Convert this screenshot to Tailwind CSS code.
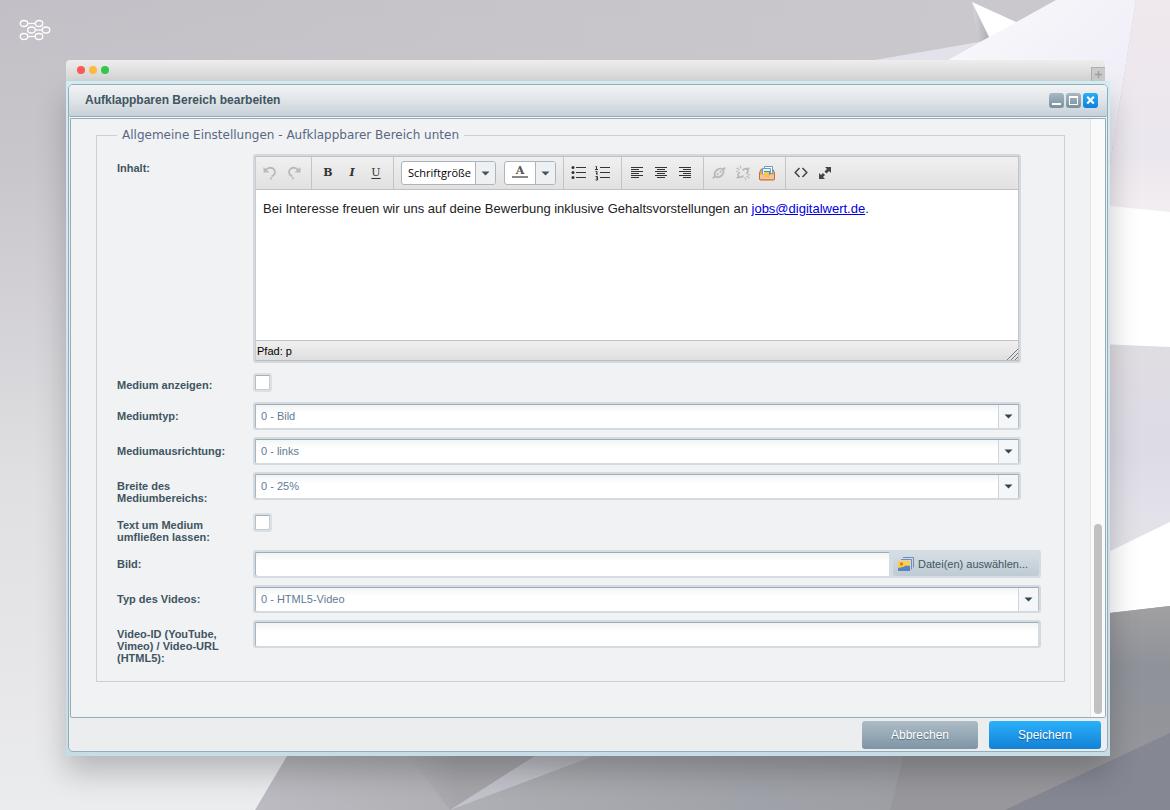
<!DOCTYPE html>
<html lang="de">
<head>
<meta charset="utf-8">
<title>Aufklappbaren Bereich bearbeiten</title>
<script src="https://cdn.jsdelivr.net/npm/@tailwindcss/browser@4"></script>
</head>
<body class="relative flex min-h-screen flex-col overflow-x-hidden bg-[#c9c7cc] font-['Liberation_Sans',Arial,sans-serif] text-[11px] leading-3 text-[#3f5561]">

<!-- Backdrop -->
<svg class="absolute inset-0 h-full w-full" viewBox="0 0 1170 810" preserveAspectRatio="none" aria-hidden="true">
  <defs>
    <linearGradient id="wall" x1="0" y1="0" x2="0" y2="1"><stop offset="0" stop-color="#c2c0c6"/><stop offset=".2" stop-color="#c8c6cb"/><stop offset=".6" stop-color="#e0dfe2"/><stop offset="1" stop-color="#ebecee"/></linearGradient>
    <linearGradient id="wallTop" x1="0" y1="0" x2="1" y2="0"><stop offset="0" stop-color="#cbc8cd" stop-opacity="0"/><stop offset="1" stop-color="#cbc8cd"/></linearGradient>
    <linearGradient id="floor" x1="0" y1="0" x2="1" y2="0"><stop offset="0" stop-color="#bcbbc1"/><stop offset=".3" stop-color="#abacb1"/><stop offset=".55" stop-color="#a0a2a9"/><stop offset="1" stop-color="#99999d"/></linearGradient>
    <linearGradient id="crystal" x1="0" y1="0" x2="1" y2="1"><stop offset="0" stop-color="#fbfafc"/><stop offset="1" stop-color="#ebe9f5"/></linearGradient>
    <linearGradient id="pink" x1="0" y1="0" x2="0" y2="1"><stop offset="0" stop-color="#efe8ed"/><stop offset=".7" stop-color="#ebe7ee"/><stop offset="1" stop-color="#f3eff1"/></linearGradient>
    <linearGradient id="lav" x1="0" y1="0" x2="0" y2="1"><stop offset="0" stop-color="#e0dde2"/><stop offset=".5" stop-color="#dddbe6"/><stop offset="1" stop-color="#e6e4ea"/></linearGradient>
    <linearGradient id="right" x1="0" y1="0" x2="0" y2="1"><stop offset="0" stop-color="#a1a0a3"/><stop offset=".3" stop-color="#8f9299"/><stop offset="1" stop-color="#97989c"/></linearGradient>
    <linearGradient id="spike" x1="0" y1="0" x2="1" y2="0"><stop offset="0" stop-color="#d8d6db"/><stop offset="1" stop-color="#aba9af"/></linearGradient>
    <linearGradient id="streak" x1="0" y1="1" x2="1" y2="0"><stop offset="0" stop-color="#c3c3cd"/><stop offset=".5" stop-color="#c3c3cd"/><stop offset="1" stop-color="#b0b0b6"/></linearGradient>
    <linearGradient id="wedge" x1="0" y1="0" x2="1" y2="0"><stop offset="0" stop-color="#a8a8ad" stop-opacity="0"/><stop offset=".4" stop-color="#a5a5aa"/><stop offset="1" stop-color="#a5a5aa"/></linearGradient>
  </defs>
  <rect width="1170" height="810" fill="url(#wall)"/>
  <rect width="1000" height="70" fill="url(#wallTop)"/>
  <rect x="1000" width="170" height="70" fill="#cbc8cd"/>
  <polygon points="840,66 985,41 1015,60 1015,90 840,90" fill="#e3e1ea"/>
  <polygon points="972,2 991,37 978,42" fill="url(#spike)"/>
  <polygon points="972,2 1016,22 1020,34 989,37" fill="#ffffff"/>
  <polygon points="1056,0 1136,0 1109,170 1109,90 930,70" fill="url(#crystal)"/>
  <polygon points="1136,0 1170,0 1170,220 1100,220 1109,170" fill="url(#pink)"/>
  <polygon points="1100,205 1170,212 1170,620 1100,620" fill="#ffffff"/>
  <polygon points="1100,344 1170,347 1170,522 1100,556" fill="url(#lav)"/>
  <polygon points="287,756 310,716 1110,613 1170,606 1170,810 255,810" fill="url(#floor)"/>
  <polygon points="1100,614 1170,606 1170,810 1100,810" fill="url(#right)"/>
  <polygon points="404,750 450,810 545,750" fill="url(#wedge)"/>
  <polygon points="450,810 538,754 610,750" fill="url(#streak)"/>
  <polygon points="905,750 890,810 1110,810 1110,750" fill="#98989c"/>
  <polygon points="1005,810 1170,733 1170,810" fill="#858893"/>
</svg>

<!-- Wallpaper logo -->
<svg class="absolute top-[19px] left-[19px] h-[22px] w-[32px]" viewBox="0 0 32 22" fill="none" stroke="#fff" stroke-width="1.3" aria-hidden="true">
  <ellipse cx="5" cy="4.500" rx="3.800" ry="3"/><ellipse cx="20" cy="4.500" rx="3.800" ry="3"/><path d="M8.800 4.500h7.400"/>
  <ellipse cx="12.500" cy="11" rx="3.800" ry="3"/><ellipse cx="27" cy="11" rx="3.800" ry="3"/><path d="M16.300 11h6.900"/>
  <ellipse cx="5" cy="17.500" rx="3.800" ry="3"/><ellipse cx="20" cy="17.500" rx="3.800" ry="3"/><path d="M8.800 17.500h7.400"/>
</svg>

<main class="relative flex flex-1 flex-col pt-[60px] pr-[60px] pb-[54px] pl-[66px]">
  <div class="flex flex-1 flex-col">
    <!-- Browser bar -->
    <div class="mr-[5px] flex h-[21px] items-center justify-between rounded-t bg-linear-to-b from-[#ededed] to-[#d6d6d6] pl-[11px]">
      <div class="flex gap-1 pb-px">
        <span class="size-2 rounded-full bg-[#fc5b57]"></span>
        <span class="size-2 rounded-full bg-[#fdbc40]"></span>
        <span class="size-2 rounded-full bg-[#34c84a]"></span>
      </div>
      <button type="button" aria-label="Neuer Tab" class="flex h-[14px] w-[14px] items-center justify-center self-end border-t border-l border-[#b0b0b0] bg-[#cbcbcb]">
        <svg class="size-[7px]" viewBox="0 0 7 7" stroke="#a0a0a0" stroke-width="1.500"><path d="M3.500 0v7M0 3.500h7"/></svg>
      </button>
    </div>

    <div class="flex flex-1 flex-col bg-linear-to-b from-[#d3ebf3] to-[#c6dde8] px-[2px] pt-[3px] pb-1 shadow-[0_16px_28px_rgba(0,0,0,0.22)]">
      <!-- Dialog -->
      <section class="flex flex-1 flex-col rounded-[5px] border border-[#94acba] bg-[#ebedef]">
        <header class="flex h-8 items-center justify-between rounded-t bg-linear-to-b from-[#f2f3f4] via-[#dfe4e8] to-[#c5cfd7] pr-[9px] pb-[2px] pl-4">
          <h1 class="text-[12px] font-bold text-[#3f5561]">Aufklappbaren Bereich bearbeiten</h1>
          <div class="flex gap-[2px]">
            <button type="button" aria-label="Minimieren" class="size-[15px] rounded-[3px] bg-linear-to-b from-[#a8b8c4] to-[#7a909f]"><svg viewBox="0 0 15 15" fill="#fff"><rect x="3" y="10" width="9" height="2"/></svg></button>
            <button type="button" aria-label="Maximieren" class="size-[15px] rounded-[3px] bg-linear-to-b from-[#a8b8c4] to-[#7a909f]"><svg viewBox="0 0 15 15" fill="none" stroke="#fff"><path d="M3.500 3v9M11.500 3v9M3 11.500h9"/><path stroke-width="2" d="M3 4h9"/></svg></button>
            <button type="button" aria-label="Schließen" class="size-[15px] rounded-[3px] bg-linear-to-b from-[#27aef5] to-[#0c80da]"><svg viewBox="0 0 15 15" fill="none" stroke="#fff" stroke-width="2.200"><path d="M4.200 3.800l6.600 6.800M10.800 3.800l-6.600 6.800"/></svg></button>
          </div>
        </header>

        <div class="mx-px mt-px flex flex-1 rounded-b-[2px] border border-[#94acba] bg-[#f0f2f4] shadow-[0_-1px_0_#f4f7f9,0_-2px_0_#94acba]">
          <form class="min-w-0 flex-1 pt-2 pr-[25px] pb-[34px] pl-[25px]">
            <fieldset class="border border-[#cbd0d5] pr-[23px] pb-[17px] pl-5">
              <legend class="px-[5px] font-['DejaVu_Sans',Verdana,sans-serif] text-[12px] leading-4 text-[#5a6784]">Allgemeine Einstellungen - Aufklappbarer Bereich unten</legend>

              <!-- Content editor -->
              <div class="flex pt-[11px] pr-5 pb-[10px]">
                <div class="w-[136px] shrink-0 pt-2 font-bold" id="inhalt">Inhalt:</div>
                <div class="min-w-0 flex-1 rounded-[3px] border-2 border-[#d3d9df] text-black">
                  <div class="border border-t-[#bfc1c3] border-r-[#c4c4c8] border-b-[#b9bcc0] border-l-[#c8cbd0]">
                    <div class="flex h-[33px] border-b border-[#c1c1c1] bg-linear-to-b from-[#f0f0f0] to-[#e1e1e1]">
                      <div class="flex items-center border-r border-[#c4c4c4] pr-[5px] pb-px pl-[2px]">
                        <button type="button" aria-label="Rückgängig" class="flex size-6 items-center justify-center"><svg class="size-4" viewBox="0 0 16 16" fill="none" stroke="#b9b9b9" stroke-width="1.800"><path d="M3.500 5.500C5.500 2.600 9 2 11.300 3.800s2.600 5.200-.6 7L9.600 11.600"/><path fill="#b9b9b9" stroke="none" d="M1.500 2v5.500H7.500zM8 12.500h2v1.700h-2z"/></svg></button>
                        <button type="button" aria-label="Wiederholen" class="flex size-6 items-center justify-center"><svg class="size-4 -scale-x-100" viewBox="0 0 16 16" fill="none" stroke="#b9b9b9" stroke-width="1.800"><path d="M3.500 5.500C5.500 2.600 9 2 11.300 3.800s2.600 5.200-.6 7L9.600 11.600"/><path fill="#b9b9b9" stroke="none" d="M1.500 2v5.500H7.500zM8 12.500h2v1.700h-2z"/></svg></button>
                      </div>
                      <div class="flex items-center border-r border-[#c4c4c4] pr-[5px] pb-px pl-1 text-[#333]">
                        <button type="button" aria-label="Fett" class="size-6 font-['DejaVu_Serif',serif] text-[11px] font-bold">B</button>
                        <button type="button" aria-label="Kursiv" class="size-6 font-['DejaVu_Serif',serif] text-[11px] font-bold italic">I</button>
                        <button type="button" aria-label="Unterstrichen" class="size-6 font-['DejaVu_Serif',serif] text-[11px] underline underline-offset-2">U</button>
                      </div>
                      <div class="flex items-center gap-2 border-r border-[#c4c4c4] px-[7px]">
                        <div class="relative">
                          <select aria-label="Schriftgröße" class="block h-6 w-[95px] appearance-none rounded-[3px] border border-[#a9b5c0] bg-white pl-[6px] font-['Open_Sans',sans-serif] text-[11px] leading-5 text-black"><option>Schriftgröße</option></select>
                          <svg class="pointer-events-none absolute top-px right-px h-[22px] w-5" viewBox="0 0 20 22"><rect width="20" height="22" rx="2" fill="#eef0f2"/><path d="M.5 0v22" stroke="#a9b5c0"/><path fill="#3f5561" d="M6.500 9.500h8l-4 4z"/></svg>
                        </div>
                        <div class="flex h-6 w-[52px] overflow-hidden rounded-[3px] border border-[#a9b5c0] bg-white">
                          <button type="button" aria-label="Textfarbe" class="flex flex-1 flex-col items-center pt-[3px] font-['DejaVu_Serif',serif] text-[11px] leading-[11px] font-bold text-[#555]">A<span class="h-[2px] w-4 bg-[#888]"></span></button>
                          <button type="button" aria-label="Textfarbe wählen" class="w-5 border-l border-[#a9b5c0] bg-[#eef0f2]"><svg class="h-[22px] w-[19px]" viewBox="0 0 19 22"><path fill="#3f5561" d="M5.500 9.500h8l-4 4z"/></svg></button>
                        </div>
                      </div>
                      <div class="flex items-center border-r border-[#c4c4c4] pr-[6px] pb-px pl-[3px]">
                        <button type="button" aria-label="Aufzählung" class="flex size-6 items-center justify-center"><svg class="size-4" viewBox="0 0 16 16" fill="#333"><path d="M5 2h10v1H5zM5 7h10v1H5zM5 12h10v1H5z"/><circle cx="2" cy="2.500" r="1.500"/><circle cx="2" cy="7.500" r="1.500"/><circle cx="2" cy="12.500" r="1.500"/></svg></button>
                        <button type="button" aria-label="Nummerierung" class="flex size-6 items-center justify-center"><svg class="size-4" viewBox="0 0 16 16" fill="#333"><path d="M5 2h10v1H5zM5 7h10v1H5zM5 12h10v1H5z"/><path fill="none" stroke="#333" d="M.5 1.500h1V4M0 4.500h3M.5 6.500h1.500v1.500l-1 1h2M.5 11.500h2v3.500h-2M1 13.200h1.500"/></svg></button>
                      </div>
                      <div class="flex items-center border-r border-[#c4c4c4] pr-[6px] pb-px pl-[3px]">
                        <button type="button" aria-label="Linksbündig" class="flex size-6 items-center justify-center"><svg class="size-4" viewBox="0 0 16 16" stroke="#333"><path d="M2 2.500h12M2 4.500h8M2 6.500h12M2 8.500h8M2 10.500h12M2 12.500h8"/></svg></button>
                        <button type="button" aria-label="Zentriert" class="flex size-6 items-center justify-center"><svg class="size-4" viewBox="0 0 16 16" stroke="#333"><path d="M2 2.500h12M4 4.500h8M2 6.500h12M4 8.500h8M2 10.500h12M4 12.500h8"/></svg></button>
                        <button type="button" aria-label="Rechtsbündig" class="flex size-6 items-center justify-center"><svg class="size-4" viewBox="0 0 16 16" stroke="#333"><path d="M2 2.500h12M6 4.500h8M2 6.500h12M6 8.500h8M2 10.500h12M6 12.500h8"/></svg></button>
                      </div>
                      <div class="flex items-center border-r border-[#c4c4c4] pr-[6px] pb-px pl-[3px]">
                        <button type="button" aria-label="Link einfügen" class="flex size-6 items-center justify-center"><svg class="size-4" viewBox="0 0 16 16" fill="none" stroke="#b9b9b9" stroke-width="1.900"><ellipse cx="8" cy="8" rx="5" ry="3.600" transform="rotate(-40 8 8)"/><path d="M1.800 13.200l2.400-2M11.800 4.800l2.400-2"/><path stroke-width="1.500" d="M5.800 9.800l1.700-1.400M8.700 7.600l1.700-1.400"/></svg></button>
                        <button type="button" aria-label="Link entfernen" class="flex size-6 items-center justify-center"><svg class="size-4" viewBox="0 0 16 16" fill="none" stroke="#b9b9b9" stroke-width="1.800"><path d="M7.500 5.500C9 3.800 11 3.300 12.200 4.200s.8 3-.7 4.600M8.500 10.500c-1.500 1.700-3.500 2.200-4.700 1.300s-.8-3 .7-4.600"/><path d="M1.800 13.200l2.400-2M11.800 4.800l2.400-2"/><path stroke-width="1.100" d="M1.500 3l3 1.800M5 .8l1 2.700M.8 6.200h2.700M11.500 11.200l3 1.800M10 12.500l1 2.700M12.500 9.800h2.700"/></svg></button>
                        <button type="button" aria-label="Bild einfügen" class="flex size-6 items-center justify-center"><svg class="size-4" viewBox="0 0 16 16"><path fill="#e9a663" stroke="#b8703a" d="M.5 7.500L2.500 4h11l2 3.500v6.500q0 1-1 1h-13q-1 0-1-1z"/><path fill="#fff" stroke="#6a9cc8" d="M5.500 1.500h8v7h-8z"/><path fill="#e8f2fb" stroke="#6a9cc8" d="M3.500 3.500h8v6h-8z"/><path fill="#4a88c4" d="M5 6h6v3H5z"/><path fill="#f6c93e" d="M5 7h5v4H5z"/><path fill="#f4c590" d="M1 9.500h4l1 2h4l1-2h4v4.500H1z"/></svg></button>
                      </div>
                      <div class="flex items-center pb-px pl-[3px]">
                        <button type="button" aria-label="Quelltext" class="flex size-6 items-center justify-center"><svg class="size-4" viewBox="0 0 16 16" fill="none" stroke="#444" stroke-width="1.500"><path d="M6.500 3L2.200 7.500 6.500 12M9.500 3l4.300 4.500L9.500 12"/></svg></button>
                        <button type="button" aria-label="Vollbild" class="flex size-6 items-center justify-center"><svg class="size-4" viewBox="0 0 16 16" fill="#444"><path d="M8 2h6v6l-2-2-2.500 2.500-2-2L10 4zM8 14H2V8l2 2 2-2 2 2-2 2z"/></svg></button>
                      </div>
                    </div>
                    <div contenteditable="true" role="textbox" aria-labelledby="inhalt" class="h-[150px] bg-white px-[7px] pt-[11px] text-[13px] leading-4 text-[#222] outline-none"><p>Bei Interesse freuen wir uns auf deine Bewerbung inklusive Gehaltsvorstellungen an <a href="mailto:jobs@digitalwert.de" class="text-[#0000e0] underline">jobs@digitalwert.de</a>.</p></div>
                    <div class="flex h-5 items-center justify-between border-t border-[#c1c1c1] bg-linear-to-b from-[#f0f0f0] to-[#dfdfdf] pl-px text-[11px]">
                      <span>Pfad: p</span>
                      <svg class="size-[11px] self-end" viewBox="0 0 11 11" stroke="#777" aria-hidden="true"><path d="M0 11L11 0M4 11l7-7M8 11l3-3"/></svg>
                    </div>
                  </div>
                </div>
              </div>

              <div class="flex pb-[10px]">
                <label for="show" class="w-[136px] shrink-0 pt-[6px] pr-5 font-bold">Medium anzeigen:</label>
                <input id="show" type="checkbox" class="size-[19px] appearance-none rounded-[3px] border-2 border-[#dbe0e4] bg-white shadow-[inset_0_1px_0_#a3b1bb,inset_1px_0_0_#b4bfc8,inset_-1px_-1px_0_#c5ced5]">
              </div>

              <div class="flex pr-5 pb-[7px]">
                <label for="typ" class="w-[136px] shrink-0 pt-2 font-bold">Mediumtyp:</label>
                <div class="relative flex-1">
                  <select id="typ" class="block h-7 w-full appearance-none rounded-[3px] border-2 border-[#d3dae0] bg-linear-to-b from-[#f1f3f3] to-white to-40% pl-[6px] text-[11px] leading-4 text-[#5f7a94] shadow-[inset_0_1px_0_#9dacb6,inset_1px_0_0_#a9b5be,inset_-1px_0_0_#b4c0c8]"><option>0 - Bild</option></select>
                  <svg class="pointer-events-none absolute top-[3px] right-[3px] h-[23px] w-5" viewBox="0 0 20 23"><rect width="20" height="23" fill="#f4f6f7"/><path d="M.5 0v23" stroke="#cdd6dc"/><path fill="#2f4653" d="M6.500 9.500h8l-4 4z"/></svg>
                </div>
              </div>

              <div class="flex pr-5 pb-[7px]">
                <label for="align" class="w-[136px] shrink-0 pt-2 font-bold">Mediumausrichtung:</label>
                <div class="relative flex-1">
                  <select id="align" class="block h-7 w-full appearance-none rounded-[3px] border-2 border-[#d3dae0] bg-linear-to-b from-[#f1f3f3] to-white to-40% pl-[6px] text-[11px] leading-4 text-[#5f7a94] shadow-[inset_0_1px_0_#9dacb6,inset_1px_0_0_#a9b5be,inset_-1px_0_0_#b4c0c8]"><option>0 - links</option></select>
                  <svg class="pointer-events-none absolute top-[3px] right-[3px] h-[23px] w-5" viewBox="0 0 20 23"><rect width="20" height="23" fill="#f4f6f7"/><path d="M.5 0v23" stroke="#cdd6dc"/><path fill="#2f4653" d="M6.500 9.500h8l-4 4z"/></svg>
                </div>
              </div>

              <div class="flex pr-5 pb-[9px]">
                <label for="breite" class="w-[136px] shrink-0 pt-2 font-bold">Breite des<br>Mediumbereichs:</label>
                <div class="relative flex-1">
                  <select id="breite" class="block h-7 w-full appearance-none rounded-[3px] border-2 border-[#d3dae0] bg-linear-to-b from-[#f1f3f3] to-white to-40% pl-[6px] text-[11px] leading-4 text-[#5f7a94] shadow-[inset_0_1px_0_#9dacb6,inset_1px_0_0_#a9b5be,inset_-1px_0_0_#b4c0c8]"><option>0 - 25%</option></select>
                  <svg class="pointer-events-none absolute top-[3px] right-[3px] h-[23px] w-5" viewBox="0 0 20 23"><rect width="20" height="23" fill="#f4f6f7"/><path d="M.5 0v23" stroke="#cdd6dc"/><path fill="#2f4653" d="M6.500 9.500h8l-4 4z"/></svg>
                </div>
              </div>

              <div class="flex pb-[7px]">
                <label for="wrap" class="w-[136px] shrink-0 pt-[6px] font-bold">Text um Medium<br>umfließen lassen:</label>
                <input id="wrap" type="checkbox" class="size-[19px] appearance-none rounded-[3px] border-2 border-[#dbe0e4] bg-white shadow-[inset_0_1px_0_#a3b1bb,inset_1px_0_0_#b4bfc8,inset_-1px_-1px_0_#c5ced5]">
              </div>

              <div class="flex pb-[7px]">
                <label for="bild" class="w-[136px] shrink-0 pt-2 font-bold">Bild:</label>
                <div class="flex h-7 flex-1 rounded-[3px] bg-[#d5dbe2] p-[2px]">
                  <input id="bild" type="text" class="min-w-0 flex-1 rounded-l-[2px] bg-linear-to-b from-[#f1f3f3] to-white to-40% px-[6px] text-[11px] text-[#5f7a94] shadow-[inset_0_1px_0_#9dacb6,inset_1px_0_0_#a9b5be]">
                  <button type="button" class="ml-1 flex w-[146px] items-center gap-1 rounded-[3px] bg-linear-to-b from-[#d6dee4] to-[#bfcad3] pl-[5px] text-[11px] text-[#3f5561]">
                    <svg class="size-4" viewBox="0 0 16 16" aria-hidden="true"><path fill="none" stroke="#6f8cc0" d="M5 1.500h10.500v10M3 3.500h10.500v10"/><path fill="#f8cf4e" d="M0 5h12v10H0z"/><circle cx="3.500" cy="8" r="1.700" fill="#ec7b1c"/><path fill="#5884bd" d="M0 12l5-1 3-1.500 4 .5v5H0z"/></svg>
                    <span>Datei(en) auswählen...</span>
                  </button>
                </div>
              </div>

              <div class="flex pb-[7px]">
                <label for="video" class="w-[136px] shrink-0 pt-2 font-bold">Typ des Videos:</label>
                <div class="relative flex-1">
                  <select id="video" class="block h-7 w-full appearance-none rounded-[3px] border-2 border-[#d3dae0] bg-linear-to-b from-[#f1f3f3] to-white to-40% pl-[6px] text-[11px] leading-4 text-[#5f7a94] shadow-[inset_0_1px_0_#9dacb6,inset_1px_0_0_#a9b5be,inset_-1px_0_0_#b4c0c8]"><option>0 - HTML5-Video</option></select>
                  <svg class="pointer-events-none absolute top-[3px] right-[3px] h-[23px] w-5" viewBox="0 0 20 23"><rect width="20" height="23" fill="#f4f6f7"/><path d="M.5 0v23" stroke="#cdd6dc"/><path fill="#2f4653" d="M6.500 9.500h8l-4 4z"/></svg>
                </div>
              </div>

              <div class="flex">
                <label for="vid" class="w-[136px] shrink-0 pt-2 font-bold">Video-ID (YouTube,<br>Vimeo) / Video-URL<br>(HTML5):</label>
                <input id="vid" type="text" class="h-7 min-w-0 flex-1 rounded-[3px] border-2 border-[#d3dae0] bg-linear-to-b from-[#f1f3f3] to-white to-40% px-[6px] text-[11px] text-[#5f7a94] shadow-[inset_0_1px_0_#9dacb6,inset_1px_0_0_#a9b5be,inset_-1px_0_0_#d3dae0]">
              </div>
            </fieldset>
          </form>
          <!-- Scroll track -->
          <div class="flex w-[15px] flex-col justify-end border-l border-[#e4e4e4] bg-[#fafafa] px-[3px] pb-[3px]">
            <div class="h-[190px] rounded-full bg-[#c1c1c1]"></div>
          </div>
        </div>

        <footer class="flex h-[33px] items-center justify-end gap-[11px] pr-[6px]">
          <button type="button" class="h-7 w-[116px] rounded-[3px] bg-linear-to-b from-[#aebcc6] to-[#7e95a5] text-[12px] text-white text-shadow-[0_1px_1px_#5a6f7d]">Abbrechen</button>
          <button type="submit" class="h-7 w-[112px] rounded-[3px] bg-linear-to-b from-[#2cb0fa] to-[#1281d6] text-[12px] text-white text-shadow-[0_1px_1px_#0b5ea5]">Speichern</button>
        </footer>
      </section>
    </div>
  </div>
</main>
</body>
</html>
